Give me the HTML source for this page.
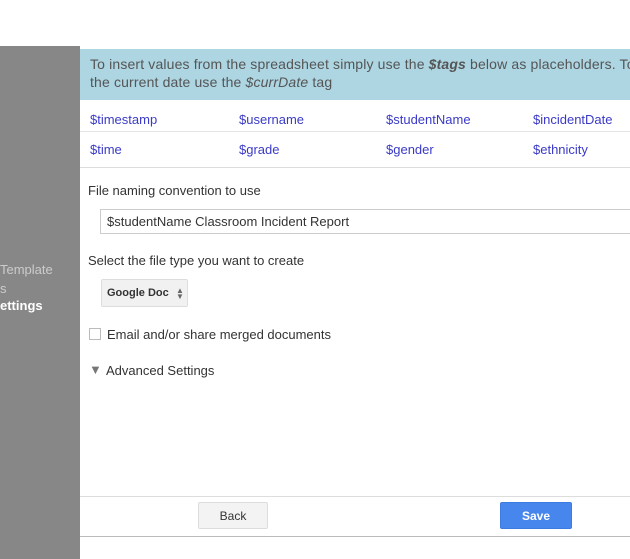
<!DOCTYPE html>
<html><head><style>
body{margin:0;width:630px;height:559px;overflow:hidden;background:#fff;font-family:"Liberation Sans",Arial,sans-serif;position:relative}
.side{position:absolute;left:0;top:46px;width:80px;height:513px;background:#878787}
.side div{position:absolute;left:0;font-size:13px;color:#ccc;white-space:nowrap}
.main{position:absolute;left:80px;top:46px;width:560px;height:490px;border-bottom:1px solid #bbb}
.hdr{position:absolute;left:0;top:3px;width:560px;height:51px;background:#add5e2;color:#555;font-size:14px;letter-spacing:0.15px;line-height:18px;padding:6px 10px;box-sizing:border-box;white-space:nowrap}
.tag{position:absolute;font-size:13px;color:#3a3ac8}
.l{position:absolute;font-size:13px;color:#333;white-space:nowrap}
.hr{position:absolute;left:0;width:560px;height:1px;background:#e4e4e4}
.btn{position:absolute;top:456px;height:27px;width:70px;border-radius:2px;font-size:12px;text-align:center;line-height:27px;box-sizing:border-box}
</style></head><body>
<div class="side">
<div style="top:216px">Template</div>
<div style="top:235px">s</div>
<div style="top:252px;color:#fff;font-weight:bold">ettings</div>
</div>
<div class="main">
<div class="hdr">To insert values from the spreadsheet simply use the <b><i>$tags</i></b> below as placeholders. To<br>the current date use the <i>$currDate</i> tag</div>
<div class="tag" style="left:10px;top:66px">$timestamp</div>
<div class="tag" style="left:159px;top:66px">$username</div>
<div class="tag" style="left:306px;top:66px">$studentName</div>
<div class="tag" style="left:453px;top:66px">$incidentDate</div>
<div class="hr" style="top:85px"></div>
<div class="tag" style="left:10px;top:96px">$time</div>
<div class="tag" style="left:159px;top:96px">$grade</div>
<div class="tag" style="left:306px;top:96px">$gender</div>
<div class="tag" style="left:453px;top:96px">$ethnicity</div>
<div class="hr" style="top:121px;background:#ddd"></div>
<div class="l" style="left:8px;top:137px">File naming convention to use</div>
<div style="position:absolute;left:20px;top:163px;width:560px;height:25px;border:1px solid #ccc;box-sizing:border-box;font-size:13px;color:#333;line-height:23px;padding-left:6px">$studentName Classroom Incident Report</div>
<div class="l" style="left:8px;top:207px">Select the file type you want to create</div>
<div style="position:absolute;left:21px;top:233px;width:87px;height:28px;border:1px solid #ddd;border-radius:2px;background:#f1f1f1;box-sizing:border-box;font-size:11px;color:#333;line-height:26px;padding-left:5px;font-weight:bold">Google Doc <span style="position:absolute;left:74px;top:0;font-size:8px;color:#666;line-height:6px;margin-top:8px">&#9650;<br>&#9660;</span></div>
<div style="position:absolute;left:9px;top:282px;width:12px;height:12px;border:1px solid #bbb;box-sizing:border-box"></div>
<div class="l" style="left:27px;top:281px">Email and/or share merged documents</div>
<div class="l" style="left:9px;top:316px;color:#777;font-size:13px">&#9660;</div>
<div class="l" style="left:26px;top:317px">Advanced Settings</div>
<div class="hr" style="top:450px;background:#ddd"></div>
<div class="btn" style="left:118px;background:#f3f3f3;border:1px solid #ddd;color:#333">Back</div>
<div class="btn" style="left:420px;width:72px;background:#4787ed;color:#fff;font-weight:bold;border:1px solid #3c7be0">Save</div>
</div>
</body></html>
